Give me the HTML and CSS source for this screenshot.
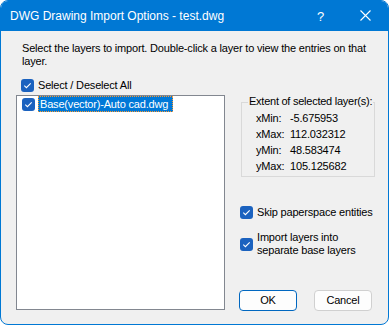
FILE: index.html
```html
<!DOCTYPE html>
<html>
<head>
<meta charset="utf-8">
<link rel="stylesheet" href="styles.css">
</head>
<body>
<div class="window">
  <div class="titlebar">
    <span class="title">DWG Drawing Import Options - test.dwg</span>
    <div class="caption-btns">
      <span class="cap-btn help">?</span>
      <span class="cap-btn close">
        <svg width="11" height="11" viewBox="0 0 11 11"><path d="M0.5 0.5 L10.5 10.5 M10.5 0.5 L0.5 10.5" stroke="#fff" stroke-width="1.1" fill="none"/></svg>
      </span>
    </div>
  </div>
  <div class="content">
    <p class="intro">Select the layers to import. Double-click a layer to view the entries on that layer.</p>
    <label class="check-row select-all">
      <span class="cb"><svg width="13" height="13" viewBox="0 0 13 13"><path d="M3.3 6.7 L5.4 8.7 L9.7 4.3" stroke="#fff" stroke-width="1.1" fill="none"/></svg></span>
      <span>Select / Deselect All</span>
    </label>
    <div class="main">
      <div class="listbox">
        <div class="list-item">
          <span class="cb"><svg width="13" height="13" viewBox="0 0 13 13"><path d="M3.3 6.7 L5.4 8.7 L9.7 4.3" stroke="#fff" stroke-width="1.1" fill="none"/></svg></span>
          <span class="item-text">Base(vector)-Auto cad.dwg</span>
        </div>
      </div>
      <div class="side">
        <fieldset class="group">
          <legend>Extent of selected layer(s):</legend>
          <div class="extent">
            <span>xMin:</span><span>-5.675953</span>
            <span>xMax:</span><span>112.032312</span>
            <span>yMin:</span><span>48.583474</span>
            <span>yMax:</span><span>105.125682</span>
          </div>
        </fieldset>
        <label class="check-row skip">
          <span class="cb"><svg width="13" height="13" viewBox="0 0 13 13"><path d="M3.3 6.7 L5.4 8.7 L9.7 4.3" stroke="#fff" stroke-width="1.1" fill="none"/></svg></span>
          <span>Skip paperspace entities</span>
        </label>
        <label class="check-row import">
          <span class="cb"><svg width="13" height="13" viewBox="0 0 13 13"><path d="M3.3 6.7 L5.4 8.7 L9.7 4.3" stroke="#fff" stroke-width="1.1" fill="none"/></svg></span>
          <span>Import layers into<br>separate base layers</span>
        </label>
        <div class="buttons">
          <button class="btn default">OK</button>
          <button class="btn">Cancel</button>
        </div>
      </div>
    </div>
  </div>
</div>
</body>
</html>
```
FILE: styles.css
```css
* { box-sizing: border-box; }
html, body { margin: 0; padding: 0; background: #ffffff; }
body {
  font-family: "Liberation Sans", Arial, sans-serif;
  font-size: 11px;
  letter-spacing: -0.18px;
  color: #000;
}
.window {
  width: 389px;
  height: 325px;
  border: 1px solid #0078d4;
  border-radius: 8px;
  background: #f0f0f0;
  overflow: hidden;
}
.titlebar {
  height: 30px;
  background: #0078d4;
  color: #fff;
  display: flex;
  align-items: center;
}
.title {
  font-size: 12px;
  letter-spacing: 0;
  line-height: 30px;
  padding-left: 9px;
}
.caption-btns {
  margin-left: auto;
  display: flex;
}
.cap-btn {
  width: 46px;
  height: 30px;
  display: flex;
  align-items: center;
  justify-content: center;
}
.help {
  font-size: 13px;
  letter-spacing: 0;
  padding-left: 3px;
}
.close svg { display: block; margin-top: -1px; }
.content {
  padding: 11px 13px 0 15px;
}
.intro {
  margin: 0 0 0 6px;
  line-height: 13px;
}
.check-row {
  display: flex;
  align-items: center;
  gap: 4px;
  line-height: 13px;
}
.cb {
  width: 13px;
  height: 13px;
  border-radius: 3px;
  background: #1b62bf;
  flex: none;
  display: block;
}
.cb svg { display: block; }
.select-all {
  margin: 11px 0 0 5px;
}
.main {
  margin-top: 3px;
  display: grid;
  grid-template-columns: 209px 136px;
  column-gap: 14px;
  align-items: start;
}
.listbox {
  height: 215px;
  background: #fff;
  border: 1px solid #828790;
}
.list-item {
  display: flex;
  align-items: center;
  height: 16px;
  padding-left: 5px;
  gap: 3px;
}
.item-text {
  background: #0078d7;
  color: #fff;
  border: 1px dotted #ff9a2e;
  line-height: 14px;
  padding: 0 4px 0 1px;
}
.group {
  margin: 0 0 0 2px;
  width: 134px;
  min-width: 0;
  border: 1px solid #d9d9d9;
  padding: 0 0 2px 6px;
}
.group legend {
  padding: 0 1px 2px;
  line-height: 13px;
  white-space: nowrap;
  letter-spacing: -0.25px;
}
.extent {
  display: grid;
  grid-template-columns: 34px auto;
  line-height: 16px;
  padding-left: 8px;
}
.skip {
  margin: 29px 0 0 1px;
}
.import {
  margin: 12px 0 0 1px;
}
.buttons {
  margin-top: 33px;
  display: flex;
  gap: 17px;
}
.btn {
  width: 58px;
  height: 21px;
  border: 1px solid #d0d0d0;
  border-radius: 4px;
  background: #fdfdfd;
  font-family: "Liberation Sans", Arial, sans-serif;
  font-size: 11px;
  letter-spacing: -0.18px;
  color: #000;
  padding: 0;
  line-height: 19px;
}
.btn.default {
  border-color: #0067c0;
}
```
